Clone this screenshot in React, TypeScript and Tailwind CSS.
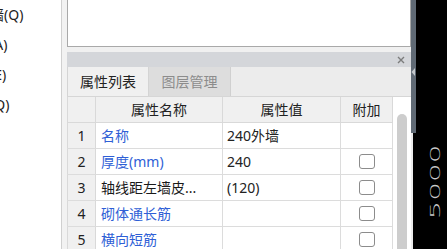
const font = { fontFamily: '"Noto Sans", "Noto Sans CJK SC", sans-serif' };

const navItems = ["砌体墙(Q)", "暗梁(A)", "墙垛(E)", "幕墙(Q)"];

const rows = [
  { n: 1, name: "名称", value: "240外墙", blue: true, check: false },
  { n: 2, name: "厚度(mm)", value: "240", blue: true, check: true },
  { n: 3, name: "轴线距左墙皮...", value: "(120)", blue: false, check: true },
  { n: 4, name: "砌体通长筋", value: "", blue: true, check: true },
  { n: 5, name: "横向短筋", value: "", blue: true, check: true },
];

const Checkbox = () => (
  <div className="h-[15px] w-[16px] rounded-[3px] border border-[#8c8c8c] bg-white" />
);

const PropertyTable = () => {
  return (
    <div className="flex min-h-0 flex-1 border-t border-[#d6d6d6] text-[14px] leading-none text-[#222]">
      <div className="flex flex-col">
        <div className="flex h-[26px] shrink-0 border-b border-[#d9d9d9] bg-[#f0f0f0]">
          <div className="w-[29px] border-x border-[#d9d9d9]" />
          <div className="flex w-[127px] items-center justify-center border-r border-[#d9d9d9]">属性名称</div>
          <div className="flex w-[118px] items-center justify-center border-r border-[#d9d9d9]">属性值</div>
          <div className="flex w-[52px] items-center justify-center border-r border-[#d9d9d9]">附加</div>
        </div>
        {rows.map((r) => (
          <div key={r.n} className="flex h-[26px] shrink-0 border-b border-[#dcdcdc] bg-white">
            <div className="flex w-[29px] items-center justify-center border-x border-[#d9d9d9] bg-[#f0f0f0]">{r.n}</div>
            <div
              className={`flex w-[127px] items-center whitespace-nowrap border-r border-[#dcdcdc] pl-[5px] ${
                r.blue ? "text-[#2f5fd6]" : "text-[#1a1a1a]"
              }`}
            >
              {r.name}
            </div>
            <div className="flex w-[118px] items-center border-r border-[#dcdcdc] pl-[4px]">{r.value}</div>
            <div className="flex w-[52px] items-center justify-center border-r border-[#dcdcdc]">
              {r.check && <Checkbox />}
            </div>
          </div>
        ))}
      </div>
      <div className="w-[18px] bg-white pl-[4px] pt-[17px]">
        <div className="h-[160px] w-[10px] rounded-full bg-[#cdcdcd]" />
      </div>
    </div>
  );
};

const App = () => {
  return (
    <div className="flex h-[249px] w-[447px] overflow-hidden bg-black" style={font}>
      {/* left tree */}
      <div className="w-[62px] shrink-0 overflow-hidden border-r border-[#d0d0d0] bg-white">
        <div className="-ml-[38px] flex flex-col text-[14px] leading-none text-[#222]">
          {navItems.map((t) => (
            <div key={t} className="flex h-[30px] items-center whitespace-nowrap">
              {t}
            </div>
          ))}
        </div>
      </div>
      <div className="w-[5px] shrink-0 bg-[#f2f2f2]" />

      {/* property dock */}
      <div className="flex w-[344px] shrink-0 flex-col overflow-hidden bg-[#f0f0f0]">
        <div className="h-[47px] shrink-0 border-x border-b border-[#a9a9a9] bg-white" />
        <div className="h-[5px] shrink-0" />
        <div className="flex h-[15px] shrink-0 items-center justify-end bg-[#d4d6da] pr-[6px]">
          <svg width="8" height="8" viewBox="0 0 8 8">
            <path d="M1 1L7 7M7 1L1 7" stroke="#7c7c7c" strokeWidth="1.4" />
          </svg>
        </div>
        <div className="flex h-[29px] shrink-0 bg-[#ececec] text-[14px] leading-none">
          <div className="flex w-[82px] items-center justify-center border-x border-[#d4d4d4] bg-[#f0f0f0] text-[#222]">
            属性列表
          </div>
          <div className="flex w-[82px] items-center justify-center border-r border-[#d0d0d0] bg-[#dddddd] text-[#8c8c8c]">
            图层管理
          </div>
        </div>
        <PropertyTable />
      </div>

      {/* splitter */}
      <div className="flex w-[5px] shrink-0 flex-col">
        <div className="flex h-[133px] flex-col bg-[#606a75] pt-[68px]">
          <svg width="5" height="8" viewBox="0 0 5 8">
            <path d="M4 0L0.5 4L4 8Z" fill="#c4c8cc" />
          </svg>
        </div>
        <div className="flex flex-1">
          <div className="w-[2px] bg-[#ececec]" />
          <div className="flex-1 bg-black" />
        </div>
      </div>

      {/* canvas */}
      <div className="relative flex-1 bg-black">
        <div
          className="absolute left-[1px] top-[175px] -rotate-90 scale-x-[2.1] text-[14px] leading-none text-[#c9c9c9]"
          style={{ fontFamily: '"DejaVu Sans", sans-serif', fontWeight: 200 }}
        >
          5000
        </div>
      </div>
    </div>
  );
};

export default App;
